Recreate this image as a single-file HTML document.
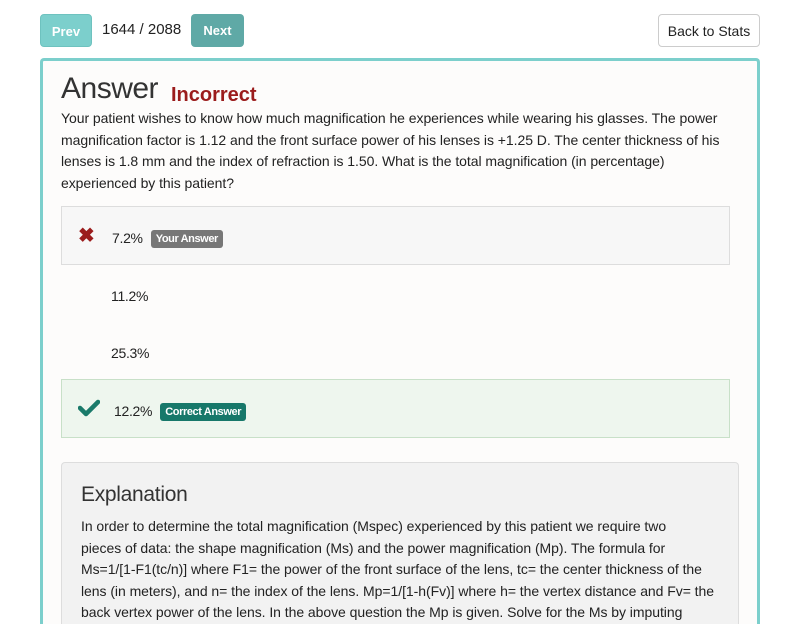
<!DOCTYPE html>
<html><head><meta charset="utf-8"><style>
html,body{margin:0;width:800px;height:624px;overflow:hidden}
body{background:#fff;font-family:"Liberation Sans",sans-serif;color:#222;position:relative}
.btn{position:absolute;top:14px;height:33px;border-radius:4px;font-size:14px;line-height:33px;text-align:center;box-sizing:border-box}
.card{position:absolute;left:40px;top:58px;width:720px;height:566px;border:3px solid #7ccfcc;border-bottom:none;border-radius:4px 4px 0 0;background:#fdfcfb;box-sizing:border-box}
.q{position:absolute;left:61px;top:108px;font-size:14px;line-height:21.5px;letter-spacing:-0.05px;white-space:nowrap;color:#222}
.row{position:absolute;left:61px;width:669px;box-sizing:border-box;font-size:14px;letter-spacing:-0.3px}
.lbl{display:inline-block;color:#fff;font-size:11px;font-weight:bold;padding:0 5px;height:18px;line-height:18px;border-radius:3px;letter-spacing:-0.4px;vertical-align:1px;margin-left:8px}
.exp{position:absolute;left:61px;top:462px;width:678px;height:162px;background:#f2f2f2;border:1px solid #ddd;border-bottom:none;border-radius:4px 4px 0 0;box-sizing:border-box;overflow:hidden}
</style></head><body>
<div class="btn" style="left:40px;width:52px;background:#7ccfcc;border:1px solid #6ec2bf;color:#fff;font-weight:bold;font-size:13px">Prev</div>
<div style="position:absolute;left:102px;top:21px;font-size:15px">1644 / 2088</div>
<div class="btn" style="left:191px;width:53px;background:#5fa9a6;color:#fff;font-weight:bold;font-size:13px">Next</div>
<div class="btn" style="left:658px;width:102px;border:1px solid #ccc;background:#fff;color:#222">Back to Stats</div>
<div class="card"></div>
<div style="position:absolute;left:61px;top:72px;font-size:30px;color:#333;letter-spacing:-0.5px">Answer</div>
<div style="position:absolute;left:171px;top:84px;font-size:20px;font-weight:bold;color:#9b1c1c">Incorrect</div>
<div class="q">Your patient wishes to know how much magnification he experiences while wearing his glasses. The power<br>magnification factor is 1.12 and the front surface power of his lenses is +1.25 D. The center thickness of his<br>lenses is 1.8 mm and the index of refraction is 1.50. What is the total magnification (in percentage)<br>experienced by this patient?</div>
<div class="row" style="top:206px;height:59px;background:#f7f7f7;border:1px solid #ddd"><span style="position:absolute;left:16px;top:16px;color:#9b1c1c;font-size:20px;font-weight:bold">✖</span><span style="position:absolute;left:50px;top:23px">7.2%<span class="lbl" style="background:#777">Your Answer</span></span></div>
<div class="row" style="top:266px;height:57px"><span style="position:absolute;left:50px;top:22px">11.2%</span></div>
<div class="row" style="top:324px;height:56px"><span style="position:absolute;left:50px;top:21px">25.3%</span></div>
<div class="row" style="top:379px;height:59px;background:#eef6ee;border:1px solid #c8e0c8"><svg style="position:absolute;left:16px;top:19px" width="22" height="18" viewBox="0 0 22 18"><path d="M2 9 L8 15 L20 3" fill="none" stroke="#1a7a6a" stroke-width="4.5" stroke-linecap="round" stroke-linejoin="round"/></svg><span style="position:absolute;left:52px;top:23px">12.2%<span class="lbl" style="background:#17786a">Correct Answer</span></span></div>
<div class="exp">
<div style="position:absolute;left:19px;top:20px;font-size:21px;color:#333;letter-spacing:-0.3px">Explanation</div>
<div style="position:absolute;left:19px;top:53px;font-size:14px;line-height:21.5px;letter-spacing:-0.05px;white-space:nowrap">In order to determine the total magnification (Mspec) experienced by this patient we require two<br>pieces of data: the shape magnification (Ms) and the power magnification (Mp). The formula for<br>Ms=1/[1-F1(tc/n)] where F1= the power of the front surface of the lens, tc= the center thickness of the<br>lens (in meters), and n= the index of the lens. Mp=1/[1-h(Fv)] where h= the vertex distance and Fv= the<br>back vertex power of the lens. In the above question the Mp is given. Solve for the Ms by imputing</div>
</div>
</body></html>
